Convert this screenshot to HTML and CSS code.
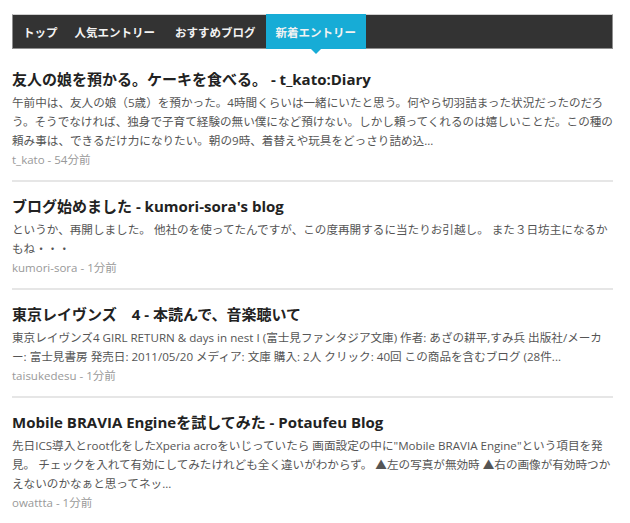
FILE: index.html
```html
<!DOCTYPE html>
<html lang="ja">
<head>
<meta charset="utf-8">
<title>新着エントリー</title>
<link rel="stylesheet" href="styles.css">
</head>
<body>
<div class="page">
  <nav class="nav">
    <a class="nav-item" href="#">トップ</a>
    <a class="nav-item" href="#">人気エントリー</a>
    <a class="nav-item" href="#">おすすめブログ</a>
    <a class="nav-item active" href="#">新着エントリー</a>
  </nav>
  <ul class="entries">
    <li class="entry">
      <h2 class="entry-title">友人の娘を預かる。ケーキを食べる。 - t_kato:Diary</h2>
      <p class="entry-desc">午前中は、友人の娘（5歳）を預かった。4時間くらいは一緒にいたと思う。何やら切羽詰まった状況だったのだろう。そうでなければ、独身で子育て経験の無い僕になど預けない。しかし頼ってくれるのは嬉しいことだ。この種の頼み事は、できるだけ力になりたい。朝の9時、着替えや玩具をどっさり詰め込...</p>
      <div class="entry-meta">t_kato - 54分前</div>
    </li>
    <li class="entry">
      <h2 class="entry-title">ブログ始めました - kumori-sora's blog</h2>
      <p class="entry-desc">というか、再開しました。 他社のを使ってたんですが、この度再開するに当たりお引越し。 また３日坊主になるかもね・・・</p>
      <div class="entry-meta">kumori-sora - 1分前</div>
    </li>
    <li class="entry">
      <h2 class="entry-title">東京レイヴンズ　4 - 本読んで、音楽聴いて</h2>
      <p class="entry-desc">東京レイヴンズ4 GIRL RETURN &amp; days in nest I (富士見ファンタジア文庫) 作者: あざの耕平,すみ兵 出版社/メーカー: 富士見書房 発売日: 2011/05/20 メディア: 文庫 購入: 2人 クリック: 40回 この商品を含むブログ (28件...</p>
      <div class="entry-meta">taisukedesu - 1分前</div>
    </li>
    <li class="entry">
      <h2 class="entry-title">Mobile BRAVIA Engineを試してみた - Potaufeu Blog</h2>
      <p class="entry-desc">先日ICS導入とroot化をしたXperia acroをいじっていたら 画面設定の中に"Mobile BRAVIA Engine"という項目を発見。 チェックを入れて有効にしてみたけれども全く違いがわからず。 ▲左の写真が無効時 ▲右の画像が有効時つかえないのかなぁと思ってネッ...</p>
      <div class="entry-meta">owattta - 1分前</div>
    </li>
  </ul>
</div>
</body>
</html>
```

FILE: styles.css
```css
* { box-sizing: border-box; }

html, body {
  margin: 0;
  padding: 0;
  background: #fff;
}

body {
  font-family: "Open Sans", "Noto Sans CJK JP", sans-serif;
  color: #222;
}

.page {
  width: 601px;
  margin: 14px 0 0 12px;
}

.nav {
  display: flex;
  height: 35px;
  background: #333;
  border: 1px solid #8f8f8f;
  border-top-color: #d0d0d0;
  margin-bottom: 6px;
}

.nav-item {
  position: relative;
  display: flex;
  align-items: center;
  padding: 0 10px;
  font-size: 11.5px;
  font-weight: 700;
  color: #f2f2f2;
  text-decoration: none;
}

.nav-item:first-child {
  padding-right: 7px;
}

.nav-item.active {
  background: #17acd6;
  margin-top: -1px;
  margin-bottom: -1px;
}

.nav-item.active::after {
  content: "";
  position: absolute;
  left: 50%;
  bottom: -5px;
  margin-left: -5px;
  border-left: 5px solid transparent;
  border-right: 5px solid transparent;
  border-top: 5px solid #17acd6;
}

.entries {
  list-style: none;
  margin: 0;
  padding: 0;
}

.entry {
  padding: 13px 0 10px;
  border-bottom: 2px solid #e6e6e6;
}

.entry-title {
  margin: 0 0 3px;
  font-size: 15px;
  line-height: 22px;
  font-weight: 700;
  color: #222;
}

.entry-desc {
  margin: 0;
  font-size: 11.6px;
  line-height: 19px;
  color: #555;
}

.entry-meta {
  font-size: 11.5px;
  line-height: 20px;
  color: #999;
}
```
